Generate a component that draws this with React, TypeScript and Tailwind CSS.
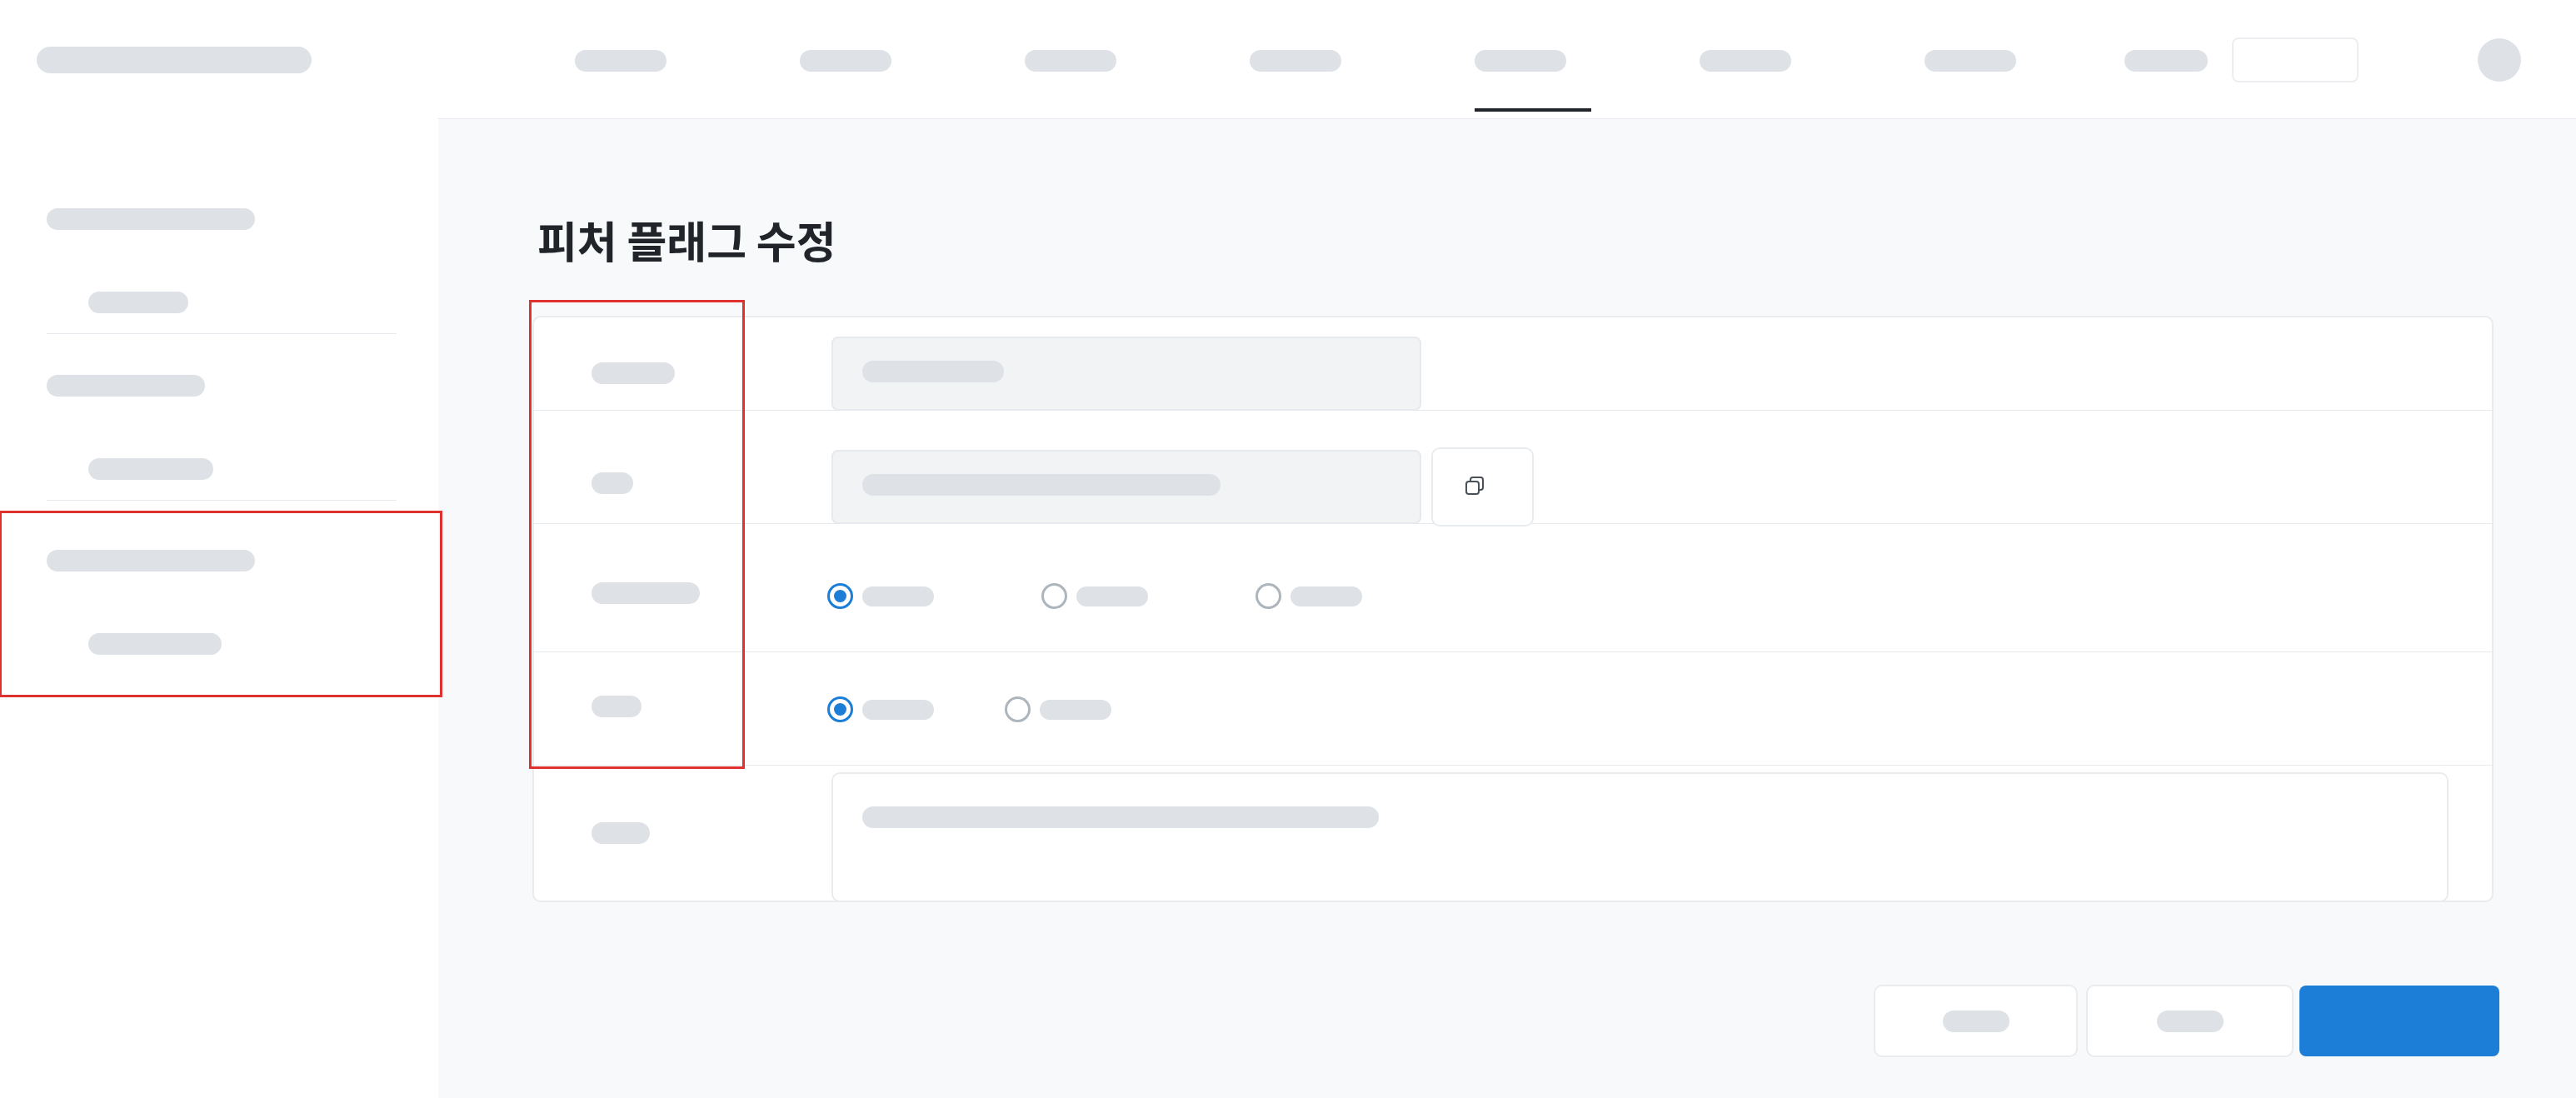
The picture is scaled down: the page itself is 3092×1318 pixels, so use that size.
import type { ReactNode } from "react";

function Bar({ className }: { className: string }) {
  return <span aria-hidden="true" className={`block shrink-0 rounded-full bg-[#dee2e6] ${className}`} />;
}

const navItems = [
  { name: "nav-1", active: false },
  { name: "nav-2", active: false },
  { name: "nav-3", active: false },
  { name: "nav-4", active: false },
  { name: "nav-5", active: true },
  { name: "nav-6", active: false },
  { name: "nav-7", active: false },
];

function Sidebar() {
  return (
    <aside className="w-[526px] shrink-0 bg-white">
      <a href="#home" aria-label="home" className="mt-14 ml-11 block w-fit">
        <Bar className="h-8 w-[330px]" />
      </a>
      <nav aria-label="sidebar" className="mt-[146px]">
        <MenuGroup id="1" title="w-[250px]" item="w-[120px]" className="mr-[50px] ml-14 border-b border-[#e6e9ed] pt-4 pb-6" />
        <MenuGroup id="2" title="w-[190px]" item="w-[150px]" className="mr-[50px] ml-14 border-b border-[#e6e9ed] pt-[49px] pb-6" />
        <div className="relative mt-3 -mr-[5px] h-[224px] border-[3px] border-l-2 border-[#e03131]">
          <MenuGroup id="3" title="w-[250px]" item="w-[160px]" className="ml-[54px] pt-11" />
        </div>
      </nav>
    </aside>
  );
}

function MenuGroup({ id, title, item, className }: { id: string; title: string; item: string; className: string }) {
  return (
    <div className={className}>
      <a href={`#group-${id}`} aria-label={`group ${id}`} className="block w-fit">
        <Bar className={`h-[26px] ${title}`} />
      </a>
      <a href={`#item-${id}`} aria-label={`item ${id}`} className="mt-[74px] ml-[50px] block w-fit">
        <Bar className={`h-[26px] ${item}`} />
      </a>
    </div>
  );
}

function Header() {
  return (
    <header className="flex h-[143px] items-center justify-between border-b border-[#e6e9ed] bg-white pr-[66px] pl-[164px]">
      <nav aria-label="main" className="flex gap-40 self-start">
        {navItems.map((item) => (
          <a
            key={item.name}
            href={`#${item.name}`}
            aria-label={item.name}
            aria-current={item.active ? "page" : undefined}
            className="block w-[110px] pt-[60px]"
          >
            <Bar className="h-[26px] w-[110px]" />
            {item.active && <span className="mt-11 block h-1 w-[140px] bg-[#212529]" />}
          </a>
        ))}
      </nav>
      <div className="flex items-center pt-0.5">
        <Bar className="mt-0.5 h-[26px] w-[100px]" />
        <button
          type="button"
          aria-label="language"
          className="ml-[29px] h-[54px] w-[152px] rounded-lg border-2 border-[#eceef1] bg-white"
        />
        <button type="button" aria-label="account" className="ml-[143px] size-[52px] rounded-full bg-[#dee2e6]" />
      </div>
    </header>
  );
}

function Row({ label, className, children }: { label: string; className: string; children: ReactNode }) {
  return (
    <div className={`grid grid-cols-[357px_minmax(0,1fr)] ${className}`}>
      <div className="pl-[69px]">
        <Bar className={label} />
      </div>
      {children}
    </div>
  );
}

function LockedInput({ name, bar }: { name: string; bar: string }) {
  return (
    <div className="grid h-[89px] w-[708px]">
      <input
        type="text"
        readOnly
        aria-label={name}
        className="col-start-1 row-start-1 rounded-lg border-2 border-[#e6e9ed] bg-[#f1f3f5] px-9"
      />
      <div className="pointer-events-none col-start-1 row-start-1 pt-[29px] pl-[37px]">
        <Bar className={`h-[26px] ${bar}`} />
      </div>
    </div>
  );
}

function Radio({ group, value, checked }: { group: string; value: string; checked?: boolean }) {
  return (
    <label className="flex items-center gap-[11px]">
      <input
        type="radio"
        name={group}
        aria-label={value}
        defaultChecked={checked}
        className="grid size-[31px] appearance-none place-items-center rounded-full border-3 border-[#adb5bd] bg-white before:size-[15px] before:rounded-full checked:border-[#1c7ed6] checked:before:bg-[#1c7ed6]"
      />
      <Bar className="h-6 w-[86px]" />
    </label>
  );
}

function CopyIcon() {
  return (
    <svg aria-hidden="true" viewBox="0 0 22 22" className="size-[22px]" fill="none" stroke="#495057" strokeWidth="2">
      <rect x="1" y="6" width="15" height="15" rx="3" />
      <path d="M6 6V4a3 3 0 0 1 3-3h9a3 3 0 0 1 3 3v9a3 3 0 0 1-3 3h-2" />
    </svg>
  );
}

function FlagForm() {
  return (
    <div className="relative mt-[61px] mr-[99px] ml-[113px] rounded-[10px] border-2 border-[#e9ecef] bg-white">
      <Row label="mt-[54px] h-[26px] w-[100px]" className="h-28 border-b border-[#e6e9ed]">
        <div className="pt-[23px]">
          <LockedInput name="name" bar="w-[170px]" />
        </div>
      </Row>
      <Row label="mt-[74px] h-[26px] w-[50px]" className="h-34 border-b border-[#e6e9ed]">
        <div className="flex items-center gap-3 self-start pt-11">
          <LockedInput name="key" bar="w-[430px]" />
          <button
            type="button"
            aria-label="copy"
            className="flex h-[95px] w-[123px] items-center rounded-[10px] border-2 border-[#e9ecef] bg-white pr-10 pb-1 pl-[39px]"
          >
            <CopyIcon />
          </button>
        </div>
      </Row>
      <Row label="mt-[70px] h-[26px] w-[130px]" className="h-[154px] border-b border-[#e6e9ed]">
        <div role="radiogroup" aria-label="type" className="-ml-[5px] flex items-start gap-[129px] pt-[71px]">
          <Radio group="type" value="type 1" checked />
          <Radio group="type" value="type 2" />
          <Radio group="type" value="type 3" />
        </div>
      </Row>
      <Row label="mt-[52px] h-[26px] w-[60px]" className="h-34 border-b border-[#e6e9ed]">
        <div role="radiogroup" aria-label="state" className="-ml-[5px] flex items-start gap-[85px] pt-[53px]">
          <Radio group="state" value="state 1" checked />
          <Radio group="state" value="state 2" />
        </div>
      </Row>
      <Row label="mt-[68px] h-[26px] w-[70px]" className="h-[162px]">
        <div className="mt-2 mr-[52px] grid h-[156px]">
          <textarea
            aria-label="description"
            className="col-start-1 row-start-1 resize-none rounded-[10px] border-2 border-[#e9ecef] bg-white px-9 py-10"
          />
          <div className="pointer-events-none col-start-1 row-start-1 pt-[41px] pl-[37px]">
            <Bar className="h-[26px] w-[620px]" />
          </div>
        </div>
      </Row>
      {/* highlight over the label column */}
      <div className="pointer-events-none absolute -top-[21px] -left-1.5 h-[563px] w-[259px] border-[3px] border-[#e03131]" />
    </div>
  );
}

export default function App() {
  return (
    <div className="flex min-h-screen bg-[#f8f9fb] font-['Noto_Sans_CJK_KR',sans-serif] text-[#212529]">
      <Sidebar />
      <div className="min-w-0 flex-1">
        <Header />
        <main>
          <h1 className="mt-[115px] ml-[119px] text-[52px] leading-[60px] font-bold">피처 플래그 수정</h1>
          <FlagForm />
          <div className="mt-[99px] mr-[92px] flex items-center justify-end pb-12">
            <button
              type="button"
              aria-label="delete"
              className="flex h-[87px] w-[245px] items-center justify-center rounded-[10px] border-2 border-[#e9ecef] bg-white"
            >
              <Bar className="h-[26px] w-20" />
            </button>
            <button
              type="button"
              aria-label="cancel"
              className="ml-2.5 flex h-[87px] w-[249px] items-center justify-center rounded-[10px] border-2 border-[#e9ecef] bg-white"
            >
              <Bar className="h-[26px] w-20" />
            </button>
            <button type="button" aria-label="save" className="ml-[7px] h-[85px] w-60 rounded-lg bg-[#1c7ed6]" />
          </div>
        </main>
      </div>
    </div>
  );
}
